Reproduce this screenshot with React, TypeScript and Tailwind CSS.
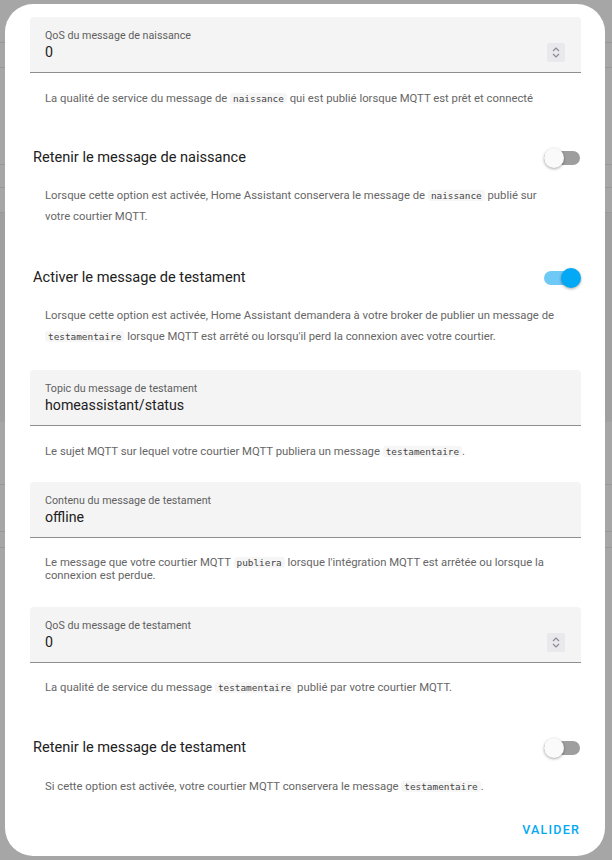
import type { ReactNode } from "react";

const Code = ({ children }: { children: ReactNode }) => (
  <code className="rounded-[3px] bg-[#f6f6f6] px-[3px] font-['DejaVu_Sans_Mono',monospace] text-[9.4px] text-[#444]">
    {children}
  </code>
);

const Spinner = () => (
  <div className="mb-[10px] flex h-[19px] w-[18px] flex-col items-center justify-center gap-[1px] self-end rounded-[2px] bg-[#e9e9ed]">
    <svg width="8" height="5" viewBox="0 0 8 5" fill="none">
      <path d="M1 4L4 1L7 4" stroke="#8a8a95" strokeWidth="1.2" />
    </svg>
    <svg width="8" height="5" viewBox="0 0 8 5" fill="none">
      <path d="M1 1L4 4L7 1" stroke="#8a8a95" strokeWidth="1.2" />
    </svg>
  </div>
);

const Field = ({ label, value, number, className }: { label: string; value: string; number?: boolean; className: string }) => (
  <div className={`flex h-[56px] justify-between rounded-t-[4px] border-b border-[#8e8e8e] bg-[#f4f4f4] pl-[15px] pr-[16px] ${className}`}>
    <div className="flex flex-col pt-[12px]">
      <span className="text-[10.7px] leading-[14px] text-[#5f5f5f]">{label}</span>
      <span className="text-[14.2px] leading-[18px] text-[#212121]">{value}</span>
    </div>
    {number && <Spinner />}
  </div>
);

const Toggle = ({ on }: { on?: boolean }) => (
  <div className="relative flex h-[20px] w-[37px] items-center">
    <div className={`h-[14px] w-[36px] rounded-full ${on ? "bg-[#6fc9f6]" : "bg-[#9e9e9e]"}`} />
    <div
      className={`absolute top-0 h-[20px] w-[20px] rounded-full shadow-[0_1px_3px_rgba(0,0,0,0.35)] ${
        on ? "right-0 bg-[#03a9f4]" : "left-0 bg-[#fafafa]"
      }`}
    />
  </div>
);

const SwitchRow = ({ label, on, className }: { label: string; on?: boolean; className: string }) => (
  <div className={`flex h-[24px] items-center justify-between pl-[3px] ${className}`}>
    <span className="text-[14.6px] text-[#212121]">{label}</span>
    <Toggle on={on} />
  </div>
);

const Help = ({ children, className }: { children: ReactNode; className: string }) => (
  <p className={`pl-[15px] pr-[21px] text-[11.3px] text-[#666] ${className}`}>{children}</p>
);

export default function App() {
  return (
    <div className="relative h-[860px] w-[612px] overflow-hidden bg-[#a6a6a6] font-['Roboto',sans-serif]">
      {/* page behind the dialog */}
      <div className="flex flex-col">
        <div className="h-[43px] border-b border-[#979797]" />
        <div className="h-[25px] border-b border-[#999]" />
        <div className="h-[97px] border-b border-[#999]" />
        <div className="h-[23px] border-b border-[#999]" />
        <div className="h-[25px] border-b border-[#999]" />
        <div className="h-[209px] bg-[#a0a0a0]" />
        <div className="h-[63px] border-b border-[#999]" />
        <div className="h-[47px] border-b border-[#999]" />
        <div className="h-[16px] border-b border-[#999]" />
      </div>

      <div className="absolute left-[5px] top-[4px] flex h-[852px] w-[600px] flex-col rounded-[28px] bg-white pl-[25px] pr-[24px] pt-[13px]">
        <Field label="QoS du message de naissance" value="0" number className="" />
        <Help className="mt-[19px] leading-[14px]">
          La qualité de service du message de <Code>naissance</Code> qui est publié lorsque MQTT est prêt et connecté
        </Help>

        <SwitchRow label="Retenir le message de naissance" className="mt-[40px]" />
        <Help className="mt-[15px] leading-[21px]">
          Lorsque cette option est activée, Home Assistant conservera le message de <Code>naissance</Code> publié sur votre courtier MQTT.
        </Help>

        <SwitchRow label="Activer le message de testament" on className="mt-[39px]" />
        <Help className="mt-[15px] leading-[21px]">
          Lorsque cette option est activée, Home Assistant demandera à votre broker de publier un message de{" "}
          <Code>testamentaire</Code> lorsque MQTT est arrêté ou lorsqu'il perd la connexion avec votre courtier.
        </Help>

        <Field label="Topic du message de testament" value="homeassistant/status" className="mt-[23px]" />
        <Help className="mt-[19px] leading-[14px]">
          Le sujet MQTT sur lequel votre courtier MQTT publiera un message <Code>testamentaire</Code>.
        </Help>

        <Field label="Contenu du message de testament" value="offline" className="mt-[23px]" />
        <Help className="mt-[18px] leading-[13px]">
          Le message que votre courtier MQTT <Code>publiera</Code> lorsque l'intégration MQTT est arrêtée ou lorsque la connexion est perdue.
        </Help>

        <Field label="QoS du message de testament" value="0" number className="mt-[25px]" />
        <Help className="mt-[18px] leading-[14px]">
          La qualité de service du message <Code>testamentaire</Code> publié par votre courtier MQTT.
        </Help>

        <SwitchRow label="Retenir le message de testament" className="mt-[41px]" />
        <Help className="mt-[16px] leading-[21px]">
          Si cette option est activée, votre courtier MQTT conservera le message <Code>testamentaire</Code>.
        </Help>

        <div className="mt-[24px] flex justify-end">
          <button className="pr-[1px] text-[12.5px] font-medium tracking-[1.2px] text-[#03a9f4]">VALIDER</button>
        </div>
      </div>
    </div>
  );
}
